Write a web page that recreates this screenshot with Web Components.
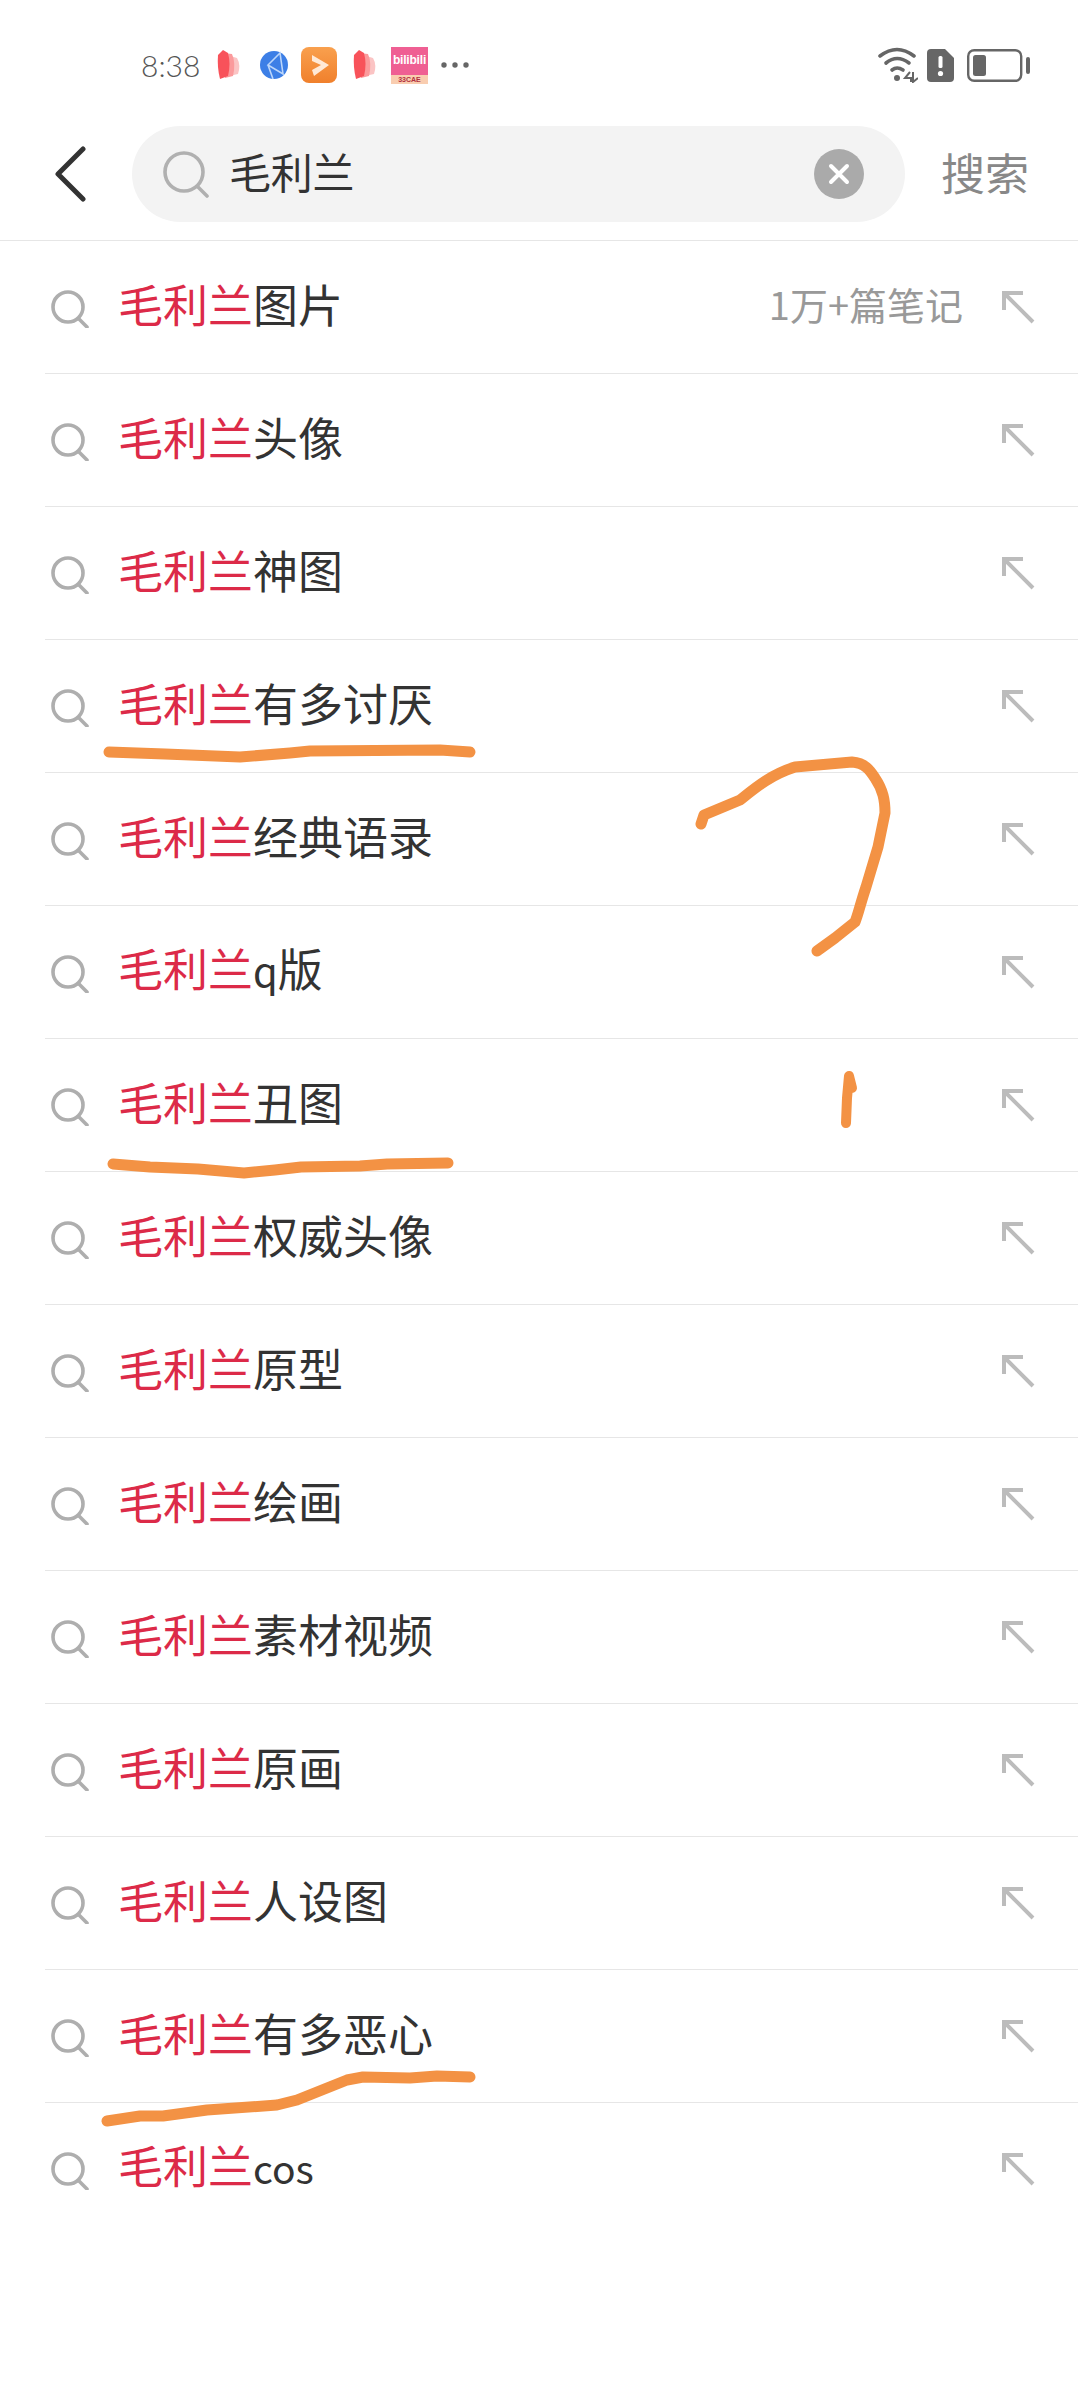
<!DOCTYPE html>
<html lang="zh">
<head>
<meta charset="utf-8">
<title>搜索</title>
<style>
  html, body { margin: 0; background: #fff; }
  body { position: relative; height: 2400px; overflow: hidden; font-family: "Noto Sans CJK SC", "Noto Sans", sans-serif; }
</style>
</head>
<body>
<status-bar></status-bar>
<search-header>毛利兰</search-header>
<suggest-list>
  <suggest-row><span slot="hit">毛利兰</span>图片<span slot="note">1万+篇笔记</span></suggest-row>
  <suggest-row><span slot="hit">毛利兰</span>头像</suggest-row>
  <suggest-row><span slot="hit">毛利兰</span>神图</suggest-row>
  <suggest-row><span slot="hit">毛利兰</span>有多讨厌</suggest-row>
  <suggest-row><span slot="hit">毛利兰</span>经典语录</suggest-row>
  <suggest-row><span slot="hit">毛利兰</span><span style="font-size:40px">q</span>版</suggest-row>
  <suggest-row><span slot="hit">毛利兰</span>丑图</suggest-row>
  <suggest-row><span slot="hit">毛利兰</span>权威头像</suggest-row>
  <suggest-row><span slot="hit">毛利兰</span>原型</suggest-row>
  <suggest-row><span slot="hit">毛利兰</span>绘画</suggest-row>
  <suggest-row><span slot="hit">毛利兰</span>素材视频</suggest-row>
  <suggest-row><span slot="hit">毛利兰</span>原画</suggest-row>
  <suggest-row><span slot="hit">毛利兰</span>人设图</suggest-row>
  <suggest-row><span slot="hit">毛利兰</span>有多恶心</suggest-row>
  <suggest-row last><span slot="hit">毛利兰</span><span style="font-size:39px">cos</span></suggest-row>
</suggest-list>
<pen-marks></pen-marks>

<script>
  const BOOK = `
    <svg width="24" height="32" viewBox="0 0 24 32">
      <path d="M10 6 L20 9 Q24 16 21 25 L12 27 Z" fill="#fbc4c4"/>
      <path d="M6 4 L15 5 Q19 14 16 27 L8 29 Z" fill="#fb9a9c"/>
      <path d="M6 1 L11 4 Q14 15 11 27 L3 30 Q0 18 1 6 Z" fill="#f8525a"/>
    </svg>`;

  class StatusBar extends HTMLElement {
    constructor() {
      super();
      this.attachShadow({ mode: 'open' });
      this.shadowRoot.innerHTML = `
        <style>
          :host { display: flex; align-items: center; height: 110px; padding: 20px 0 0 141px; box-sizing: border-box; }
          svg { display: block; flex: none; }
          .time { font: 300 30px/36px Lato, "Noto Sans", sans-serif; color: #555; width: 57px; white-space: nowrap; }
          .book { margin-left: 19px; }
          .globe { margin-left: 18px; }
          .app { margin-left: 12px; }
          .book2 { margin-left: 16px; }
          .bili { margin-left: 14px; width: 37px; height: 37px; background: #ef5f93; position: relative; overflow: hidden;
                  font: 700 12px/14px "Liberation Sans", sans-serif; color: #fff; text-align: center; }
          .bili i { position: absolute; left: 0; right: 0; bottom: 0; height: 9px; background: #f9cdb0; font: 700 7px/9px "Liberation Sans", sans-serif; color: #b03040; }
          .bili span { display: block; padding-top: 6px; letter-spacing: -.2px; }
          .dots { margin-left: 13px; }
          .right { margin-left: auto; display: flex; align-items: center; padding-right: 48px; }
        </style>
        <span class="time">8:38</span>
        <span class="book">${BOOK}</span>
        <svg class="globe" width="30" height="30" viewBox="0 0 30 30">
          <circle cx="15" cy="15" r="14" fill="#3d7fe6"/>
          <path d="M21 3 L9 15 L24 24 Z M9 15 L14 29" fill="none" stroke="#bcd6fa" stroke-width="1.6"/>
        </svg>
        <svg class="app" width="36" height="36" viewBox="0 0 36 36">
          <defs><linearGradient id="ag" x1="0" y1="0" x2="0" y2="1"><stop offset="0" stop-color="#f9a04e"/><stop offset="1" stop-color="#f0802c"/></linearGradient></defs>
          <rect width="36" height="36" rx="8" fill="url(#ag)"/>
          <path d="M11 8 L28 18 L13 29 L11 23 L20 18 L11 14 Z" fill="#ffe9d6"/>
        </svg>
        <span class="book2">${BOOK}</span>
        <div class="bili"><span>bilibili</span><i>33CAE</i></div>
        <svg class="dots" width="28" height="8" viewBox="0 0 28 8" fill="#666">
          <circle cx="3" cy="4" r="2.7"/><circle cx="14" cy="4" r="2.7"/><circle cx="25" cy="4" r="2.7"/>
        </svg>
        <div class="right">
          <svg width="40" height="36" viewBox="0 0 40 36" fill="none" stroke="#666" stroke-width="3.6" stroke-linecap="round">
            <path d="M2 9 Q19 -4 36 9"/>
            <path d="M8 16 Q19 7 31 16"/>
            <path d="M14 23 Q19 19 25 23"/>
            <circle cx="19" cy="31" r="3" fill="#666" stroke="none"/>
            <path d="M32 25 L27 31 H33 V35 M35 25 V35 L40 31" stroke-width="2" stroke-linecap="butt"/>
          </svg>
          <svg style="margin-left:9px" width="27" height="33" viewBox="0 0 27 33">
            <path d="M4 0 H18 L27 9 V29 Q27 33 23 33 H4 Q0 33 0 29 V4 Q0 0 4 0 Z" fill="#666"/>
            <rect x="11.5" y="7" width="4" height="12" rx="1.5" fill="#fff"/>
            <circle cx="13.5" cy="24.5" r="2.6" fill="#fff"/>
          </svg>
          <svg style="margin-left:13px" width="63" height="33" viewBox="0 0 63 33">
            <rect x="1.2" y="1.2" width="53" height="30.6" rx="6" fill="none" stroke="#666" stroke-width="2.4"/>
            <rect x="6" y="6" width="13" height="21" rx="2.5" fill="#666"/>
            <rect x="59" y="8" width="4" height="17" rx="2" fill="#666"/>
          </svg>
        </div>
      `;
    }
  }

  class SearchHeader extends HTMLElement {
    constructor() {
      super();
      this.attachShadow({ mode: 'open' });
      this.shadowRoot.innerHTML = `
        <style>
          :host { display: flex; align-items: center; height: 131px; padding: 0 0 2px 0; box-sizing: border-box; border-bottom: 1.5px solid #e6e6e6; }
          svg { display: block; flex: none; }
          .back { margin-left: 54px; }
          .pill { margin-left: 46px; width: 773px; height: 96px; background: #f3f3f3; border-radius: 48px; display: flex; align-items: center; box-sizing: border-box; padding: 0 41px 0 30px; }
          .q { flex: 1; margin-left: 19px; padding-bottom: 7px; font-size: 42px; line-height: 60px; color: #333; letter-spacing: -.3px; }
          .go { margin-left: 36px; padding-bottom: 5px; font-size: 44px; line-height: 60px; color: #888; }
        </style>
        <svg class="back" width="32" height="56" viewBox="0 0 32 56" fill="none" stroke="#333" stroke-width="5" stroke-linecap="round" stroke-linejoin="round">
          <path d="M29 3 L4 28 L29 53"/>
        </svg>
        <div class="pill">
          <svg width="48" height="48" viewBox="0 0 48 48" fill="none" stroke="#b0b0b0" stroke-width="3.6" stroke-linecap="round">
            <circle cx="22" cy="22" r="19"/>
            <path d="M36 37 L45 46"/>
          </svg>
          <span class="q"><slot></slot></span>
          <svg width="50" height="50" viewBox="0 0 50 50">
            <circle cx="25" cy="25" r="25" fill="#aaa"/>
            <path d="M17 17 L33 33 M33 17 L17 33" stroke="#fff" stroke-width="4" stroke-linecap="round"/>
          </svg>
        </div>
        <span class="go">搜索</span>
      `;
    }
  }

  class SuggestList extends HTMLElement {
    constructor() {
      super();
      this.attachShadow({ mode: 'open' });
      this.shadowRoot.innerHTML = `
        <style>:host { display: block; }</style>
        <slot></slot>
      `;
    }
  }

  class SuggestRow extends HTMLElement {
    constructor() {
      super();
      this.attachShadow({ mode: 'open' });
      this.shadowRoot.innerHTML = `
        <style>
          :host { display: flex; align-items: center; height: 133px; margin-left: 45px; box-sizing: border-box; border-bottom: 1.5px solid #e6e6e6; }
          :host([last]) { border-bottom-color: transparent; }
          svg { display: block; flex: none; }
          .loupe { margin: 3px 0 0 6px; }
          .text { margin-left: 29px; padding-bottom: 7px; font-size: 45px; line-height: 60px; color: #333; white-space: nowrap; }
          .hit { color: #dc2a48; }
          .note { margin-left: auto; padding-bottom: 6px; font-size: 38px; line-height: 60px; color: #999; }
          .arrow { margin-left: 38px; margin-right: 43px; }
          .arrow.alone { margin-left: auto; }
        </style>
        <svg class="loupe" width="38" height="38" viewBox="0 0 38 38" fill="none" stroke="#aeaeae" stroke-width="3.6" stroke-linecap="round">
          <circle cx="17" cy="17" r="15"/>
          <path d="M28 29 L36 37"/>
        </svg>
        <span class="text"><span class="hit"><slot name="hit"></slot></span><slot></slot></span>
        <span class="note"><slot name="note"></slot></span>
        <svg class="arrow" width="34" height="34" viewBox="0 0 34 34" fill="none" stroke="#bcbcbc" stroke-width="4">
          <path d="M3 20 V3 H22 M3 3 L32 32"/>
        </svg>
      `;
    }
    connectedCallback() {
      if (!this.querySelector('[slot="note"]')) {
        this.shadowRoot.querySelector('.note').remove();
        this.shadowRoot.querySelector('.arrow').classList.add('alone');
      }
    }
  }

  // hand drawn strokes lying over the list
  class PenMarks extends HTMLElement {
    constructor() {
      super();
      this.attachShadow({ mode: 'open' });
      this.shadowRoot.innerHTML = `
        <style>
          :host { display: block; position: absolute; left: 0; top: 0; width: 1078px; height: 2400px; pointer-events: none; }
          svg { display: block; }
          path { fill: none; stroke: #f39244; stroke-width: 11; stroke-linecap: round; stroke-linejoin: round; }
        </style>
        <svg width="1078" height="2400" viewBox="0 0 1078 2400">
          <path d="M109 752 L165 754 L240 757 L290 753 L310 751 L440 750 L470 752"/>
          <path d="M701 824 L704 815 L740 800 C755 788 770 775 795 767 L852 762 C865 763 870 770 875 778 C883 790 885 800 885 813 L878 847 L866 887 C860 905 858 915 855 922 L835 938 L817 951"/>
          <path d="M846 1123 L847 1098 L849 1076 L852 1088" style="stroke-width:10"/>
          <path d="M113 1164 L150 1167 L198 1169 L244 1173 L275 1170 L301 1167 L360 1166 L387 1164 L448 1163"/>
          <path d="M107 2121 L140 2116 L163 2116 L207 2110 L277 2105 L297 2100 L347 2080 L363 2077 L410 2078 L437 2076 L470 2077"/>
        </svg>
      `;
    }
  }

  customElements.define('status-bar', StatusBar);
  customElements.define('search-header', SearchHeader);
  customElements.define('suggest-list', SuggestList);
  customElements.define('suggest-row', SuggestRow);
  customElements.define('pen-marks', PenMarks);
</script>
</body>
</html>
